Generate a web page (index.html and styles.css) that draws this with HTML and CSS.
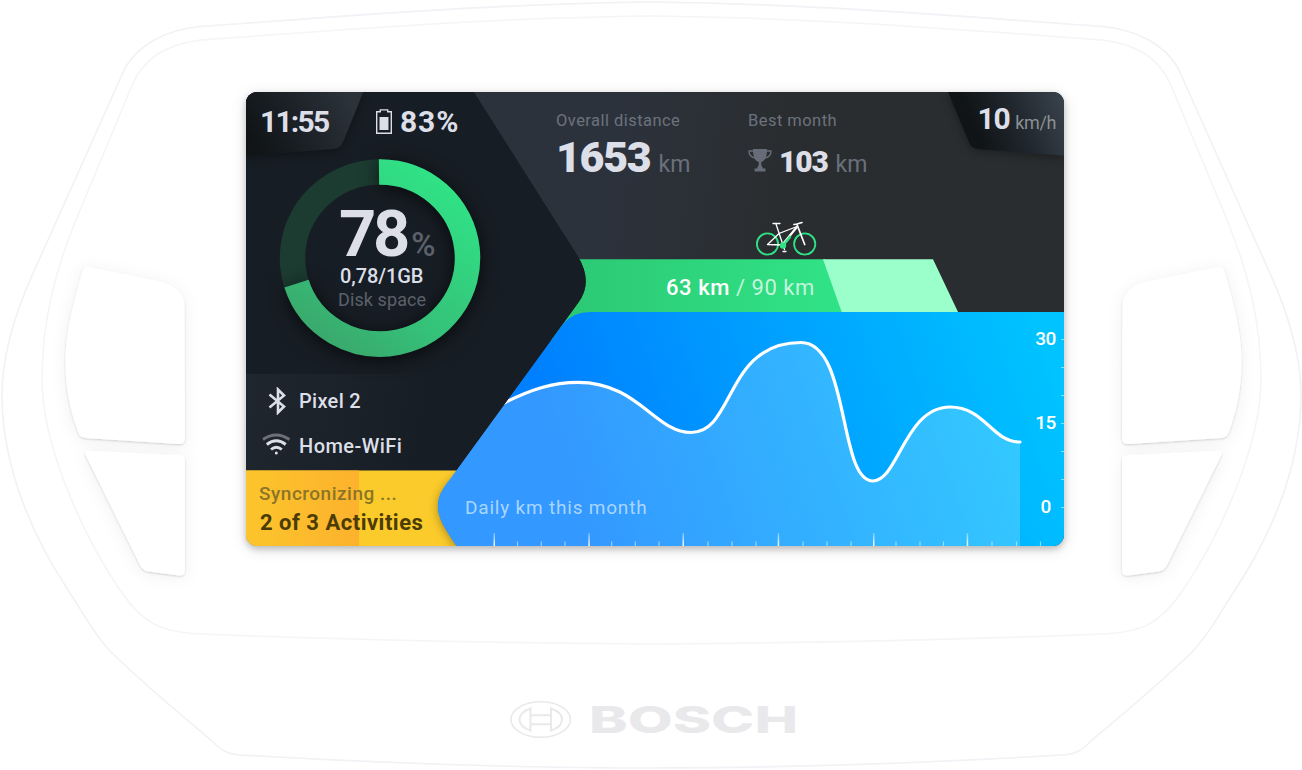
FILE: index.html
```html
<!DOCTYPE html>
<html lang="en">
<head>
<meta charset="utf-8">
<title>Bosch ride computer</title>
<link rel="stylesheet" href="styles.css">
</head>
<body>
<main class="device">
  <svg class="casing" viewBox="0 0 1302 770" aria-hidden="true">
    <defs>
      <filter id="soft" x="-30%" y="-30%" width="160%" height="160%">
        <feDropShadow dx="0" dy="1" stdDeviation="1.2" flood-color="#000" flood-opacity=".17"/>
        <feDropShadow dx="0" dy="2" stdDeviation="8" flood-color="#000" flood-opacity=".06"/>
      </filter>
      <g id="shell" fill="none" stroke-width="1.6">
        <path stroke="#f1f1f6" d="M651.5 2C480 4 340 17 200 26.500C165 30 138 45 125 68L48 240L34 271C14 315 2 355 2 395C2 470 35 540 68 590C82 611 94 635 111 652C150 690 190 722 213 742C220 749 226 754 240 755C380 763 510 768 651.500 768"/>
        <path stroke="#f5f5f7" d="M651.5 16C480 18 340 30 200 40C165 45 145 58 133 83L83 203C55 268 42 320 42 380C42 440 78 528 120 590C142 623 160 632 200 634C350 640 500 643 651.500 644"/>
      </g>
      <g id="keys" fill="#fff" filter="url(#soft)">
        <path d="M89 266.700L163 282C176 286 184.500 294 184.500 305L185 439Q185 444 179 444L86 438Q80 437.500 78.500 433C69 408 65.500 385 65.500 361C65.500 332 73 304 82.500 271Q84 266 89 266.700Z"/>
        <path d="M88 450.700L179 455Q185 455.500 185 461V570Q185 576 179 575.500L149 571.500Q143.500 571 140.500 566L85.500 455Q84 451 88 450.700Z"/>
      </g>
    </defs>
    <use href="#shell"/>
    <use href="#shell" transform="translate(1303) scale(-1 1)"/>
    <use href="#keys"/>
    <use href="#keys" transform="translate(1307) scale(-1 1)"/>
    <g fill="none" stroke="#e9e9eb" stroke-width="2">
      <ellipse cx="540.700" cy="719.500" rx="29.700" ry="17.800" stroke-width="1.600"/>
      <path d="M530.500 708.500V730.500C523 728 519.500 724 519.500 719.500S523 711 530.500 708.500ZM551 708.500V730.500C558.500 728 562 724 562 719.500S558.500 711 551 708.500ZM530.500 715.200H551M530.500 724.200H551"/>
    </g>
    <text class="brand" x="589" y="733" textLength="209" lengthAdjust="spacingAndGlyphs">BOSCH</text>
  </svg>

  <section class="screen">
    <svg class="backdrop" viewBox="246 92 818 454" aria-hidden="true">
      <defs>
        <linearGradient id="top" gradientUnits="userSpaceOnUse" x1="620" y1="120" x2="790" y2="145"><stop stop-color="#2c323c"/><stop offset="1" stop-color="#2a2d2f"/></linearGradient>
        <linearGradient id="timeTab" gradientUnits="userSpaceOnUse" x1="255" y1="150" x2="350" y2="98"><stop stop-color="#101416"/><stop offset=".5" stop-color="#1d2228"/><stop offset="1" stop-color="#2b323a"/></linearGradient>
        <linearGradient id="speedTab" gradientUnits="userSpaceOnUse" x1="975" y1="130" x2="1060" y2="94"><stop stop-color="#101416"/><stop offset=".5" stop-color="#222830"/><stop offset="1" stop-color="#38424b"/></linearGradient>
        <linearGradient id="links" gradientUnits="userSpaceOnUse" x1="246" y1="400" x2="430" y2="440"><stop stop-color="#20262e"/><stop offset="1" stop-color="#171d24"/></linearGradient>
        <linearGradient id="sync"><stop stop-color="#fcc52c"/><stop offset="1" stop-color="#fcb22d"/></linearGradient>
        <linearGradient id="goal" gradientUnits="userSpaceOnUse" x1="560" y1="0" x2="830" y2="0"><stop stop-color="#2cc873"/><stop offset="1" stop-color="#30e286"/></linearGradient>
        <linearGradient id="sea" gradientUnits="userSpaceOnUse" x1="560" y1="460" x2="1030" y2="300"><stop stop-color="#007fff"/><stop offset="1" stop-color="#00c3ff"/></linearGradient>
        <linearGradient id="ring" gradientUnits="userSpaceOnUse" x1="430" y1="170" x2="310" y2="340"><stop stop-color="#30e286"/><stop offset=".65" stop-color="#35c078"/><stop offset="1" stop-color="#3aa66b"/></linearGradient>
        <linearGradient id="tick" x1="0" y1="0" x2="0" y2="1"><stop stop-color="#fff" stop-opacity=".3"/><stop offset="1" stop-color="#fff"/></linearGradient>
        <filter id="shade" filterUnits="userSpaceOnUse" x="200" y="50" width="900" height="540" color-interpolation-filters="sRGB"><feDropShadow dx="0" dy="2" stdDeviation="5" flood-color="#000" flood-opacity=".35"/></filter>
        <filter id="glow" filterUnits="userSpaceOnUse" x="200" y="100" width="360" height="320" color-interpolation-filters="sRGB"><feDropShadow dx="0" dy="3" stdDeviation="9" flood-color="#000" flood-opacity=".65"/></filter>
        <clipPath id="plot"><path d="M1064 312H590Q573 312 563 324L448 482C440 493 434 503 441 520C443 525 446 530 456.700 546H1064Z"/></clipPath>
        <clipPath id="syncClip"><path d="M246 470.500H500V546H246Z"/></clipPath>
      </defs>
      <path fill="url(#top)" d="M246 92H1064V546H246Z"/>
      <path fill="url(#goal)" d="M540 259.300H826L846 325V340H540Z"/>
      <path fill="#9affcb" d="M823 259.300H933L958.500 313H842Z"/>
      <path fill="#171d24" d="M246 92H474L577 255Q594 282 578 303L456 470.500H246Z"/>
      <path fill="url(#links)" d="M246 374H420L500 400L456 470.500H246Z"/>
      <path fill="#fbcb2b" d="M246 470.500H480V546H246Z"/>
      <path fill="url(#sync)" d="M246 470.500H359V546H246Z"/>
      <g clip-path="url(#syncClip)"><path fill="#2388ff" filter="url(#shade)" d="M500 440L448 482C440 493 434 503 441 520C443 525 446 530 456.700 546H500Z"/></g>
      <path fill="url(#timeTab)" filter="url(#shade)" d="M246 92H363.300L343.500 141Q341 148.500 333 149L246 156Z"/>
      <path fill="url(#speedTab)" filter="url(#shade)" d="M948 92H1064V155.700L978 149Q972.500 148.500 970 144.500Z"/>

      <g clip-path="url(#plot)">
        <path fill="url(#sea)" d="M430 312H1064V546H430Z"/>
        <path fill="#fff" fill-opacity=".2" d="M430 436L505 402.500C530 390 552 382.300 578 382.300C638 382.300 655 432.500 691 432.500C735 432.500 725 342.500 801 342.500C850 342.500 838 481 873 481C898 481 905 407 950 407C985 407 992 442 1020 442V546H430Z"/>
        <path fill="none" stroke="#fff" stroke-width="3.200" stroke-linecap="round" d="M490 409.500L505 402.500C530 390 552 382.300 578 382.300C638 382.300 655 432.500 691 432.500C735 432.500 725 342.500 801 342.500C850 342.500 838 481 873 481C898 481 905 407 950 407C985 407 992 442 1020 442"/>
        <path fill="url(#tick)" d="M493.500 533h1.500v13h-1.500zM588.300 533h1.500v13h-1.500zM682.500 533h1.500v13h-1.500zM777.700 533h1.500v13h-1.500zM873 533h1.500v13h-1.500zM966.700 533h1.500v13h-1.500z"/>
        <path stroke="#fff" stroke-opacity=".5" stroke-width="1.200" d="M517.500 541.500v5M541.300 541.500v5M565 541.500v5M611.700 541.500v5M635.300 541.500v5M659 541.500v5M708 541.500v5M732 541.500v5M756 541.500v5M803 541.500v5M827 541.500v5M851 541.500v5M896 541.500v5M920 541.500v5M943.500 541.500v5M992 541.500v5M1016.500 541.500v5M1040.500 541.500v5M1061 339.500h3M1061 367.500h3M1061 395.500h3M1061 423.500h3M1061 451.500h3M1061 479.500h3M1061 507.500h3"/>
      </g>
      <path fill="#171d24" d="M470 235L565 236L577 255Q594 282 578 303L500 410.200L456 470.500L440 440Z"/>

      <g fill="none" stroke-width="25.500">
        <ellipse cx="380" cy="258" rx="87.500" ry="86" stroke="#1c3b31"/>
        <path stroke="url(#ring)" filter="url(#glow)" d="M379 172A87.500 86 0 1 1 296.500 283.700"/>
      </g>
    </svg>

    <div class="panels">
      <div class="side">
        <header class="status">
          <time class="clock">11:55</time>
          <svg class="battery" viewBox="0 0 16 25"><path fill="none" stroke="#dcdfe8" stroke-width="1.400" d="M4.300 2.700V.9H11.700V2.700H15.300V24.200H.7V2.700Z"/><path fill="#dcdfe8" d="M3.500 8h9v13h-9z"/></svg>
          <span class="charge">83%</span>
        </header>
        <div class="gauge">
          <p class="gauge-value">78<small>%</small></p>
          <p class="gauge-used">0,78/1GB</p>
          <p class="gauge-label">Disk space</p>
        </div>
        <ul class="links">
          <li>
            <svg class="bluetooth" viewBox="0 0 30 28"><path fill="none" stroke="#dcdfe8" stroke-width="2.600" d="M7.500 7.500L22 19.500L16 25.500V2.500L22 8.500L7.500 20.500"/></svg>
            <span class="link-phone">Pixel 2</span>
          </li>
          <li>
            <svg class="wifi" viewBox="0 0 30 28"><g fill="none" stroke="#dcdfe8" stroke-width="2.900"><path stroke="#6b7079" d="M1 7.500Q14 -1.500 27.500 7.500"/><path d="M4.800 12.500Q14.300 5 23.700 12.500M9 17.500Q14.300 13 19.800 17.500"/></g><circle cx="14.300" cy="21" r="1.500" fill="#dcdfe8"/></svg>
            <span class="link-wifi">Home-WiFi</span>
          </li>
        </ul>
        <div class="sync">
          <p class="sync-state">Syncronizing ...</p>
          <p class="sync-count">2 of 3 Activities</p>
        </div>
      </div>

      <div class="main">
        <div class="stats">
          <div class="stat stat-total">
            <p class="stat-label">Overall distance</p>
            <p class="stat-value big"><b>1653</b><small>km</small></p>
          </div>
          <div class="stat stat-best">
            <p class="stat-label best-label">Best month</p>
            <p class="stat-value"><svg class="trophy" viewBox="0 0 24 23"><path fill="#676d78" d="M5 0H19C19 7.500 17.500 11.500 13.300 13V16L15 19.500H17.500V22.500H6.500V19.500H9L10.700 16V13C6.500 11.500 5 7.500 5 0Z"/><path fill="none" stroke="#676d78" stroke-width="1.400" d="M5.500 2H1C1 6 3.500 8.500 7 9M18.500 2H23C23 6 20.500 8.500 17 9"/></svg><b>103</b><small>km</small></p>
          </div>
          <p class="speed">10<small>km/h</small></p>
          <svg class="bike" viewBox="754 220 62 37" fill="none" stroke-linecap="round">
            <g stroke="#30e286" stroke-width="1.800"><circle cx="766.500" cy="244" r="10.600"/><circle cx="803.700" cy="244" r="10.600"/></g>
            <g stroke="#fff" stroke-width="1.300"><path d="M772 223.500H779M775 224L783.500 249.500M766.500 244.500L778 233.500L796 226.500M766.500 244.500L782 245M782 251.500H785"/><path stroke-width="2.200" d="M795.500 227.500L782 244"/><path stroke-width="1.700" d="M793 224.500L796 224L801 222.500M796 224.500L803.700 244.500"/></g>
            <path stroke="#30e286" stroke-width="2.600" d="M789 237L784.500 242.500"/><circle cx="782" cy="245.500" r="3.200" fill="#30e286"/>
          </svg>
        </div>
        <p class="goal"><b>63 km</b> / 90 km</p>
        <div class="chart">
          <p class="chart-title">Daily km this month</p>
          <div class="scale"><span>30</span><span>15</span><span>0</span></div>
        </div>
      </div>
    </div>
  </section>
</main>
</body>
</html>
```

FILE: styles.css
```css
* { box-sizing: border-box; }
body { margin: 0; background: #fff; font-family: Roboto, "Liberation Sans", sans-serif; color: #dcdfe8; }
p, ul { margin: 0; padding: 0; list-style: none; }
svg { display: block; flex: none; }
small { font-size: inherit; font-weight: 400; color: #6a707b; }

.device { position: relative; width: 1302px; height: 770px; padding: 92px 238px 224px 246px; overflow: hidden; }
.casing { position: absolute; inset: 0; width: 1302px; height: 770px; }
.brand { font-family: Inter, sans-serif; font-weight: 800; font-size: 37px; fill: #e9e9eb; }

.screen { position: relative; width: 818px; height: 454px; border-radius: 11px; box-shadow: 0 3px 6px rgba(0,0,0,.2), 0 3px 16px rgba(0,0,0,.13); }
.backdrop { position: absolute; inset: 0; width: 818px; height: 454px; border-radius: 11px; }
.panels { position: relative; display: flex; height: 100%; white-space: nowrap; }
.side { flex: none; width: 214px; }
.main { flex: 1; min-width: 0; }

.status { display: flex; height: 60px; padding-left: 14px; font-size: 30px; line-height: 60px; font-weight: 700; }
.clock { width: 116px; letter-spacing: -1.8px; }
.battery { width: 16px; height: 25px; margin: 17px 8px 0 0; }
.charge { letter-spacing: .9px; }

.gauge { height: 222px; padding: 50px 0 0 93px; }
.gauge-value { height: 64px; font-size: 65px; line-height: 64px; font-weight: 700; letter-spacing: -3.2px; }
.gauge-value small { font-size: 33px; line-height: 1; margin-left: 4px; font-weight: 500; color: #5b606b; letter-spacing: 0; }
.gauge-used { padding-left: 1px; font-size: 20px; line-height: 20px; font-weight: 500; letter-spacing: -.1px; }
.gauge-label { font-size: 18px; line-height: 28px; color: #5b606b; letter-spacing: .1px; margin-left: -1px; }

.links { height: 96px; padding-top: 4px; font-size: 20px; line-height: 45px; font-weight: 500; }
.links li { display: flex; align-items: center; gap: 7px; height: 45px; padding-left: 16px; }
.links span { padding-top: 1px; }
.bluetooth, .wifi { width: 30px; height: 28px; }
.link-phone { letter-spacing: .3px; }
.link-wifi { letter-spacing: .45px; }

.sync { padding: 9px 0 0 13px; }
.sync-state { font-size: 19px; line-height: 29px; color: #8b7526; letter-spacing: .5px; font-weight: 500; }
.sync-count { padding-left: 1px; font-size: 22px; line-height: 30px; font-weight: 700; color: #4b3b05; letter-spacing: .5px; }

.stats { position: relative; display: flex; height: 168px; padding: 12px 8px 0 96px; }
.stat-total { width: 192px; }
.stat-best { flex: 1; }
.stat-label { font-size: 16.5px; line-height: 33px; height: 32px; color: #6c727d; letter-spacing: .45px; }
.stat-value { display: flex; align-items: baseline; font-size: 30px; line-height: 52px; font-weight: 700; height: 52px; }
.stat-value b { letter-spacing: -1.2px; }
.stat-value small { font-size: 23px; margin-left: 8px; }
.stat-value.big { font-size: 43px; line-height: 43px; }
.stat-value.big b { letter-spacing: -1.3px; }
.trophy { width: 24px; height: 23px; margin-right: 7px; }
.speed { font-size: 30px; line-height: 30px; font-weight: 700; letter-spacing: -1.3px; }
.speed small { font-size: 18px; margin-left: 6px; color: #8b9092; letter-spacing: -.4px; }
.bike { position: absolute; left: 295px; top: 128px; width: 62px; height: 37px; }

.goal { height: 52px; padding-left: 206px; font-size: 22px; line-height: 55px; color: #c4f5dc; letter-spacing: .55px; }
.goal b { font-weight: 500; color: #fff; }

.chart { display: flex; justify-content: space-between; height: 234px; padding-right: 8px; }
.chart-title { align-self: flex-end; padding: 0 0 23px 5px; font-size: 19px; line-height: 30px; color: #a9d5ff; letter-spacing: .8px; }
.scale { display: flex; flex-direction: column; gap: 56px; padding-top: 13px; font-size: 19px; line-height: 28px; font-weight: 500; color: #fff; text-align: center; letter-spacing: -.4px; }
```
